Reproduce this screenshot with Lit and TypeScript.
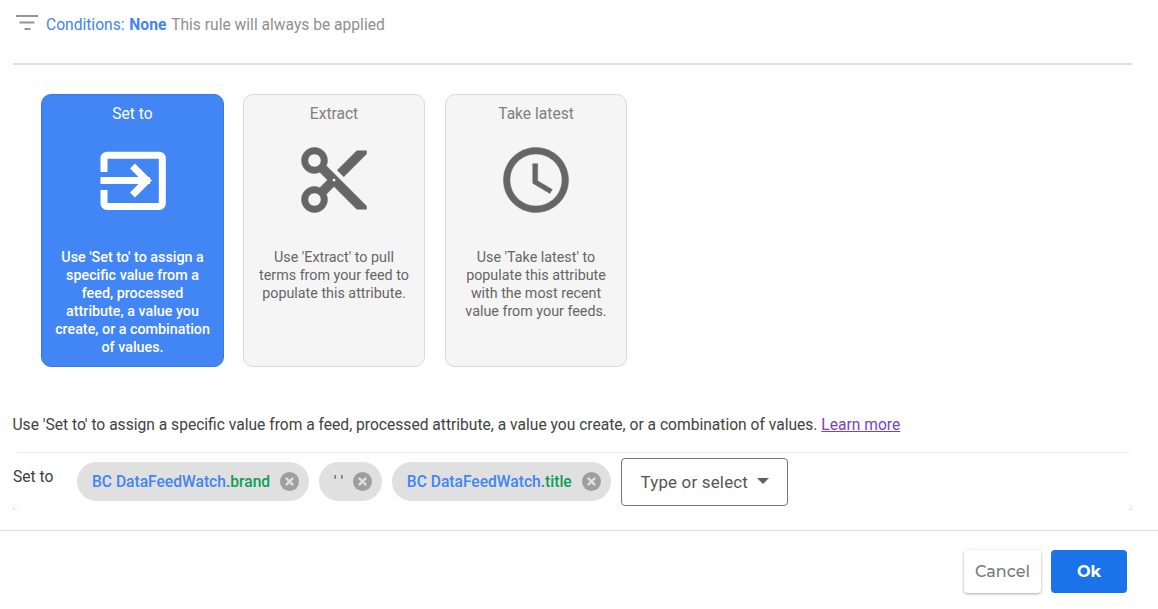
import { LitElement, html, css } from "lit";
import { customElement } from "lit/decorators.js";

const cards = [
  { title: "Set to", active: true, icon: "set", desc: "Use 'Set to' to assign a specific value from a feed, processed attribute, a value you create, or a combination of values." },
  { title: "Extract", active: false, icon: "cut", desc: "Use 'Extract' to pull terms from your feed to populate this attribute." },
  { title: "Take latest", active: false, icon: "clock", desc: "Use 'Take latest' to populate this attribute with the most recent value from your feeds." },
];

const icons: Record<string, any> = {
  set: html`<svg viewBox="0 0 78 78" width="78" height="78" fill="none" stroke="currentColor" stroke-width="7"><path d="M10 31V17.200a3 3 0 0 1 3-3h52.300a3 3 0 0 1 3 3v45.300a3 3 0 0 1-3 3H13a3 3 0 0 1-3-3V49"/><path d="M6.500 39.500H56"/><path d="M38.500 25l14.500 14.500L38.500 54"/></svg>`,
  cut: html`<svg viewBox="0 0 24 24" width="78" height="78" fill="currentColor" stroke="currentColor" stroke-width=".15"><path d="M9.64 7.64c.23-.5.36-1.05.36-1.64 0-2.21-1.79-4-4-4S2 3.79 2 6s1.79 4 4 4c.59 0 1.14-.13 1.64-.36L10 12l-2.360 2.360C7.140 14.130 6.590 14 6 14c-2.210 0-4 1.790-4 4s1.790 4 4 4 4-1.790 4-4c0-.59-.13-1.140-.36-1.640L12 14l7 7h3v-1L9.640 7.640zM6 8c-1.100 0-2-.89-2-2s.9-2 2-2 2 .89 2 2-.9 2-2 2zm0 12c-1.100 0-2-.89-2-2s.9-2 2-2 2 .89 2 2-.9 2-2 2zm6-7.500c-.28 0-.5-.22-.5-.5s.22-.5.5-.5.5.22.5.5-.22.5-.5.500zM19 3l-6 6 2 2 7-7V3z"/></svg>`,
  clock: html`<svg viewBox="0 0 24 24" width="78" height="78" fill="currentColor" stroke="currentColor" stroke-width=".15"><path d="M11.990 2C6.470 2 2 6.480 2 12s4.470 10 9.990 10C17.520 22 22 17.520 22 12S17.520 2 11.990 2zM12 20c-4.420 0-8-3.580-8-8s3.580-8 8-8 8 3.580 8 8-3.580 8-8 8zm.5-13H11v6l5.250 3.150.75-1.230-4.500-2.670z"/></svg>`,
};

const closeIcon = html`<svg class="x" viewBox="0 0 20 20" width="19" height="19"><circle cx="10" cy="10" r="10" fill="#9e9e9e"/><path d="M6.200 6.200l7.600 7.600M13.800 6.200l-7.600 7.600" stroke="#e0e0e0" stroke-width="2.400" fill="none"/></svg>`;

@customElement("app-root")
export class AppRoot extends LitElement {
  static styles = css`
    :host { display: block; width: 1158px; height: 609px; overflow: hidden; background: #fff; font-family: Roboto, "Liberation Sans", sans-serif; color: #3c4043; }
    .head { display: flex; align-items: center; height: 50px; margin: 0 26px 0 13px; gap: 8px; font-size: 15.6px; padding-left: 3px; }
    .head svg { flex: none; margin-top: -5px; }
    .blue { color: #4285f4; }
    .head b { font-weight: 700; color: #4285f4; margin-left: 1px; }
    .grey { color: #8f8f8f; margin-left: 1px; }
    .rule { height: 2px; background: #e0e0e0; margin: 13px 26px 0 13px; }
    .cards { display: flex; gap: 20px; margin: 29px 0 0 41px; }
    .card { box-sizing: border-box; width: 182px; height: 273px; border-radius: 10px; border: 1px solid #d9d9d9; background: #f5f5f5; color: #666; display: flex; flex-direction: column; align-items: center; padding: 9px 10px 0; text-align: center; }
    .card.on { background: #4285f4; border-color: #3b78e0; color: #fff; width: 183px; margin-right: -1px; }
    .title { font-size: 15.6px; line-height: 20px; color: #808080; }
    .on .title { color: #fff; }
    .ic { height: 78px; margin-top: 17px; }
    .ic svg { display: block; }
    .desc { margin-top: 29px; font-size: 14.3px; line-height: 18px; }
    .on .desc { font-weight: 500; }
    .para { margin: 48px 0 0 12.500px; font-size: 15.6px; line-height: 20px; color: #424242; }
    .para a { color: #7b3fc9; text-decoration: underline; }
    .setbox { box-sizing: border-box; display: flex; align-items: flex-start; margin: 17px 26px 0 13px; height: 58px; border-top: 1px solid #eeeeee; border-radius: 6px; position: relative; }
    .setbox::before, .setbox::after { content: ""; position: absolute; bottom: 0; width: 3px; height: 3px; border-bottom: 1px solid #e6e6e6; }
    .setbox::before { left: 0; border-left: 1px solid #e6e6e6; }
    .setbox::after { right: 0; border-right: 1px solid #e6e6e6; }
    .lab { width: 64px; font-size: 15.6px; line-height: 20px; margin-top: 14px; color: #3c3c3c; }
    .chips { display: flex; gap: 9.500px; margin-top: 9px; align-items: flex-start; }
    .chip { display: flex; align-items: center; gap: 10.200px; height: 39px; border-radius: 20px; background: #e0e0e0; padding: 0 10px 0 15px; font-size: 15.6px; font-weight: 500; white-space: nowrap; color: #4285f4; }
    .chip .g { color: #0f9d58; }
    .chip .q { color: #555; font-weight: 400; }
    .sel { box-sizing: border-box; display: flex; align-items: center; gap: 9px; height: 48px; width: 167px; margin: -4px 0 0 .6px; border: 1px solid #757575; border-radius: 4px; padding: 0 0 0 18.500px; font-size: 16.9px; letter-spacing: .2px; color: #555; background: #fff; }
    .tri { width: 0; height: 0; border-left: 6px solid transparent; border-right: 6px solid transparent; border-top: 6px solid #616161; margin-top: -2px; }
    .foot { margin-top: 20px; border-top: 1px solid #e0e0e0; display: flex; justify-content: flex-end; gap: 10px; padding: 19px 31px 0 0; }
    button { box-sizing: border-box; height: 43px; width: 77px; border-radius: 4px; border: 0; font-family: Montserrat, "Open Sans", sans-serif; font-size: 16px; font-weight: 700; }
    .cancel { background: #fff; color: #7a7a7a; font-weight: 500; box-shadow: 0 1px 3px rgba(0,0,0,.35); }
    .ok { background: #1a73e8; color: #fff; width: 76px; }
  `;

  render() {
    return html`
      <div class="head">
        <svg width="22" height="15" viewBox="0 0 22 15" fill="#949494"><rect x="0" y="0" width="22" height="2"/><rect x="3.500" y="6.500" width="15" height="2"/><rect x="8.500" y="13" width="6" height="2"/></svg>
        <span><span class="blue">Conditions: </span><b>None</b> <span class="grey">This rule will always be applied</span></span>
      </div>
      <div class="rule"></div>
      <div class="cards">
        ${cards.map(c => html`
          <div class="card ${c.active ? "on" : ""}">
            <div class="title">${c.title}</div>
            <div class="ic">${icons[c.icon]}</div>
            <div class="desc">${c.desc}</div>
          </div>`)}
      </div>
      <div class="para">Use 'Set to' to assign a specific value from a feed, processed attribute, a value you create, or a combination of values. <a href="#">Learn more</a></div>
      <div class="setbox">
        <div class="lab">Set to</div>
        <div class="chips">
          <div class="chip"><span>BC DataFeedWatch<span class="g">.brand</span></span>${closeIcon}</div>
          <div class="chip"><span class="q">' '</span>${closeIcon}</div>
          <div class="chip"><span>BC DataFeedWatch<span class="g">.title</span></span>${closeIcon}</div>
          <div class="sel"><span>Type or select</span><span class="tri"></span></div>
        </div>
      </div>
      <div class="foot">
        <button class="cancel">Cancel</button>
        <button class="ok">Ok</button>
      </div>
    `;
  }
}
